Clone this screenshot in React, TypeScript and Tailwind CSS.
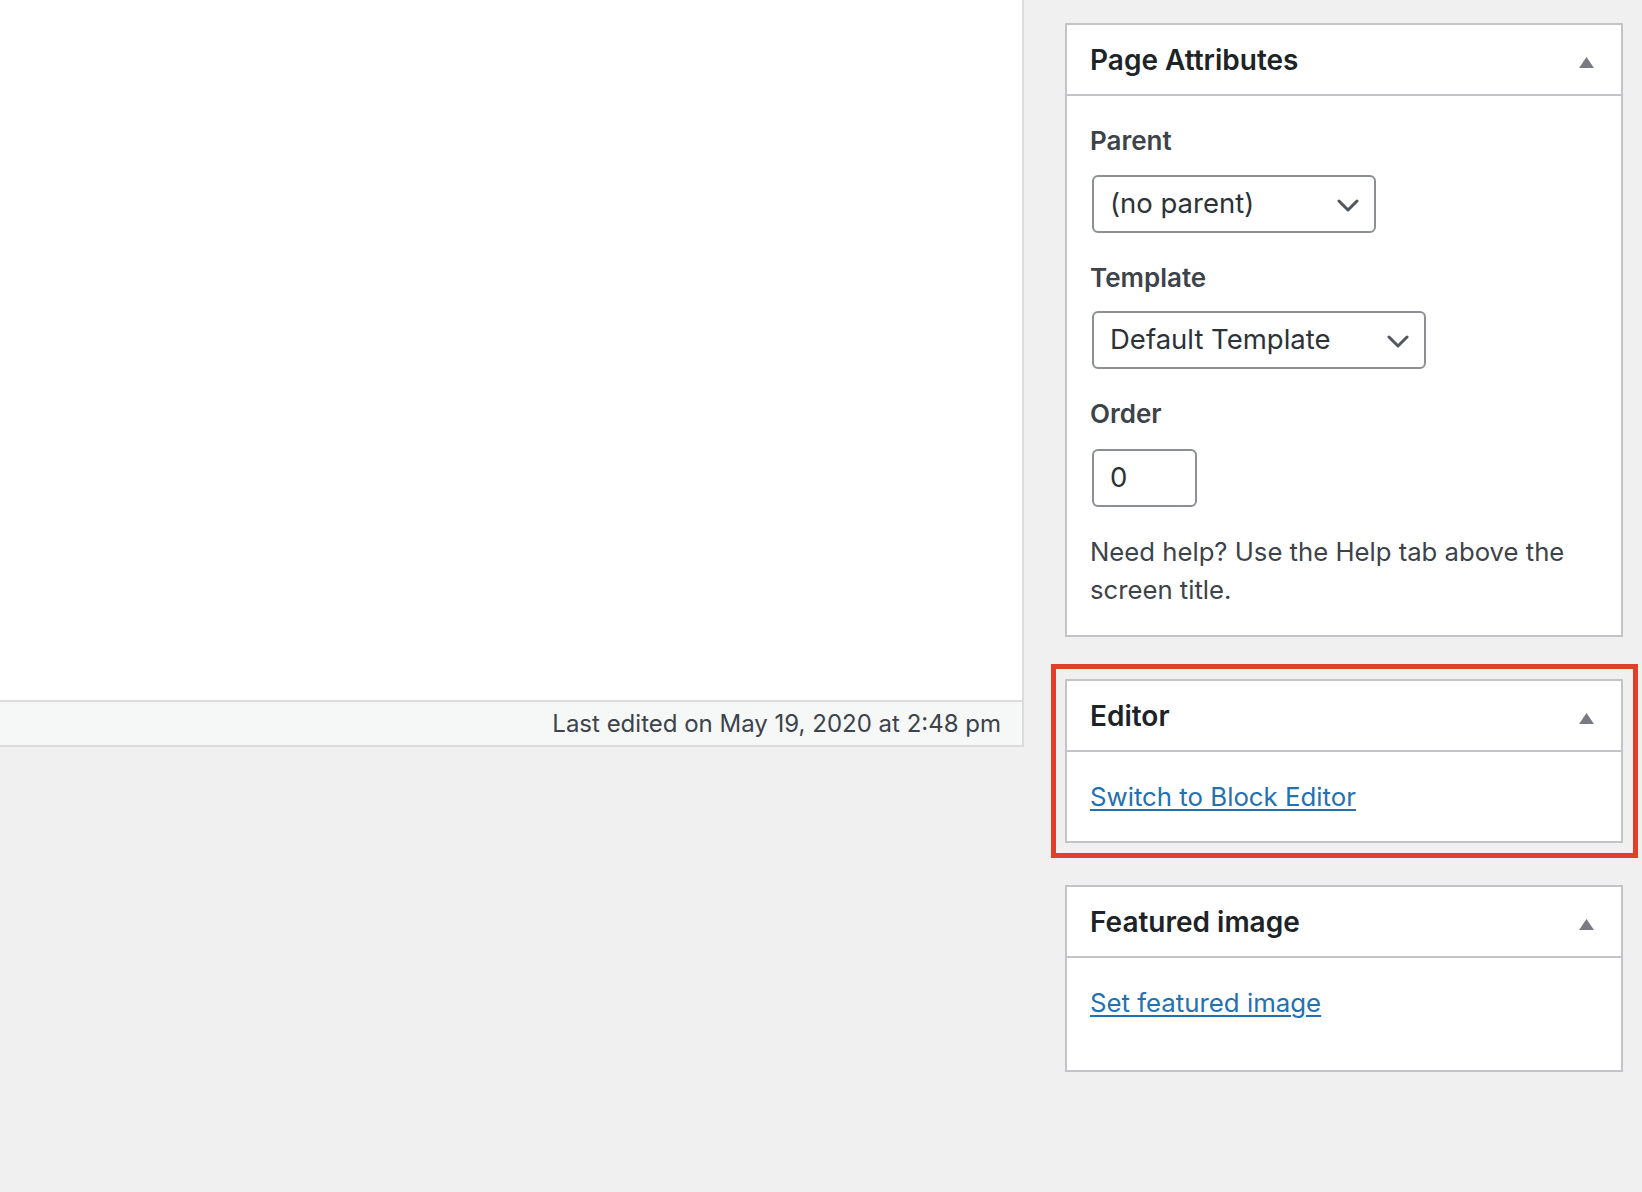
import React from "react";

function Triangle() {
  return (
    <svg width="15" height="11" viewBox="0 0 15 11" className="mt-[5px] shrink-0">
      <path d="M7.5 0 L15 11 L0 11 Z" fill="#787c82" />
    </svg>
  );
}

function Chevron() {
  return (
    <svg width="22" height="13" viewBox="0 0 22 13" className="mt-[3px] shrink-0">
      <path d="M2 2 L11 11 L20 2" fill="none" stroke="#50575e" strokeWidth="3" strokeLinecap="round" strokeLinejoin="round" />
    </svg>
  );
}

function BoxHeader({ title }: { title: string }) {
  return (
    <div className="h-[71px] border-b-2 border-[#c3c4c7] flex items-center justify-between pl-[23px] pr-[27px]">
      <h2 className="text-[28px] leading-none font-semibold text-[#1d2327]">{title}</h2>
      <Triangle />
    </div>
  );
}

export default function App() {
  return (
    <div className="w-[1642px] h-[1192px] bg-[#f0f0f1] flex overflow-hidden font-['Inter',sans-serif]">
      <div className="w-[1024px] shrink-0 flex flex-col">
        <div className="h-[702px] bg-white border-r-2 border-b-2 border-[#dcdcde]" />
        <div className="h-[45px] bg-[#f6f7f7] border-r-2 border-b-2 border-[#dcdcde] flex items-center justify-end pr-[21px]">
          <span className="text-[24px] leading-none text-[#3c434a]">Last edited on May 19, 2020 at 2:48 pm</span>
        </div>
      </div>

      <div className="pl-[41px] pt-[23px] flex flex-col gap-[42px]">
        <div className="w-[558px] bg-white border-2 border-[#c3c4c7]">
          <BoxHeader title="Page Attributes" />
          <div className="pl-[23px] pr-[24px] pt-[27px] pb-[26px]">
            <p className="text-[26px] leading-[36px] font-semibold text-[#3c434a]">Parent</p>
            <div className="mt-[16px] ml-[2px] w-[284px] h-[58px] border-2 border-[#8c8f94] rounded-[6px] flex items-center justify-between pl-[16px] pr-[15px]">
              <span className="text-[27.5px] leading-none text-[#2c3338]">(no parent)</span>
              <Chevron />
            </div>
            <p className="mt-[27px] text-[26px] leading-[36px] font-semibold text-[#3c434a]">Template</p>
            <div className="mt-[15px] ml-[2px] w-[334px] h-[58px] border-2 border-[#8c8f94] rounded-[6px] flex items-center justify-between pl-[16px] pr-[15px]">
              <span className="text-[27.5px] leading-none text-[#2c3338]">Default Template</span>
              <Chevron />
            </div>
            <p className="mt-[27px] text-[26px] leading-[36px] font-semibold text-[#3c434a]">Order</p>
            <div className="mt-[17px] ml-[2px] w-[105px] h-[58px] border-2 border-[#8c8f94] rounded-[6px] flex items-center pl-[16px]">
              <span className="text-[27.5px] leading-none text-[#2c3338]">0</span>
            </div>
            <p className="mt-[26px] text-[25.7px] leading-[38px] text-[#3c434a]">
              Need help? Use the Help tab above the screen title.
            </p>
          </div>
        </div>

        <div className="relative w-[558px] bg-white border-2 border-[#c3c4c7]">
          <div className="absolute -left-[16px] -top-[17px] -right-[17px] -bottom-[17px] border-[5px] border-[#e0402a] pointer-events-none" />
          <BoxHeader title="Editor" />
          <div className="pl-[23px] pr-[24px] pt-[26px] pb-[25px]">
            <a href="#" className="block text-[25.8px] leading-[38px] text-[#2271b1] underline decoration-[2px] underline-offset-[3px]">
              Switch to Block Editor
            </a>
          </div>
        </div>

        <div className="w-[558px] bg-white border-2 border-[#c3c4c7]">
          <BoxHeader title="Featured image" />
          <div className="pl-[23px] pr-[24px] pt-[26px] pb-[48px]">
            <a href="#" className="block text-[25.8px] leading-[38px] text-[#2271b1] underline decoration-[2px] underline-offset-[3px]">
              Set featured image
            </a>
          </div>
        </div>
      </div>
    </div>
  );
}
